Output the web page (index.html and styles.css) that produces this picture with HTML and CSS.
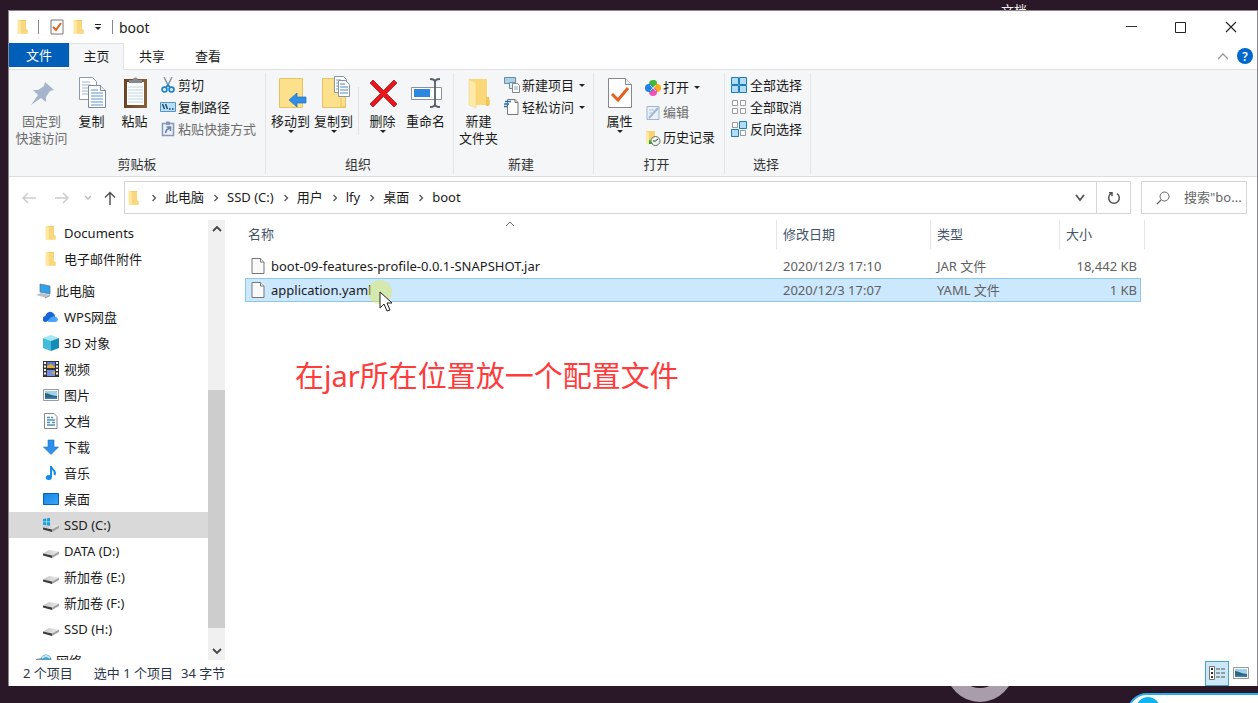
FILE: index.html
```html
<!DOCTYPE html>
<html lang="zh-CN">
<head>
<meta charset="utf-8">
<title>boot</title>
<link rel="stylesheet" href="styles.css">
</head>
<body class="desktop">
<svg class="defs" aria-hidden="true">
  <defs>
    <linearGradient id="blue" x1="0" y1="0" x2="1" y2="1"><stop offset="0" stop-color="#1583e0"/><stop offset="1" stop-color="#3aa8ff"/></linearGradient>
    <linearGradient id="wood" x1="0" y1="0" x2="1" y2="0"><stop offset="0" stop-color="#6b4424"/><stop offset="1" stop-color="#8a6038"/></linearGradient>
    <linearGradient id="metal" x1="0" y1="0" x2="1" y2="0"><stop offset="0" stop-color="#c4c4c4"/><stop offset="1" stop-color="#ededed"/></linearGradient>
    <symbol id="folder" viewBox="0 0 16 16"><path d="M3 1h8v9l1.500 1v3.500H3z" fill="#f5cb62"/><path d="M2.500.5 6 2v13.500L2.500 14z" fill="#ffe7a0"/><path d="M6 2h5v9h1.500v3.500H6z" fill="#fad77c"/></symbol>
    <symbol id="page" viewBox="0 0 16 18"><path d="M2 1.500h8.500l3.500 3.500v11.500H2z" fill="#f9f9f9" stroke="#777"/><path d="M10.500 1.500V5H14" fill="#fff" stroke="#777"/></symbol>
    <symbol id="check" viewBox="0 0 16 18"><path d="M2 2h12v14H2z" fill="#fff" stroke="#777"/><path d="m4 9 3 3 5-7" fill="none" stroke="#e0601e" stroke-width="2"/></symbol>
    <symbol id="drive" viewBox="0 0 16 16"><path d="M0 10.500 6 7l10 1.500-7 4z" fill="url(#metal)"/><path d="m0 10.500 9 2V15l-9-2.500z" fill="#3c3c3c"/><path d="m9 12.500 7-4V11l-7 4z" fill="#a2a2a2"/></symbol>
    <symbol id="picture" viewBox="0 0 16 16"><path d="M.5 2.500h15v11H.5z" fill="#fff" stroke="#999"/><path d="M2 4h12v8H2z" fill="#9fd0f2"/><path d="M2 6c4 0 6 3 12 3v3H2z" fill="#2d6674"/><path d="M2 10.500h12V12H2z" fill="#3e7fc0"/></symbol>
    <symbol id="chev" viewBox="0 0 8 8"><path d="m2.500 1 3 3-3 3" fill="none" stroke="#555" stroke-width="1.300"/></symbol>
  </defs>
</svg>

<span class="desk-label">文档</span>
<div class="desk-ring"></div>
<div class="desk-pill"><i></i></div>

<section class="window">
  <header class="titlebar">
    <svg class="i16"><use href="#folder"/></svg>
    <span class="bar"></span>
    <button class="plain qa-check" aria-label="属性"><svg class="i16 tall"><use href="#check"/></svg></button>
    <button class="plain" aria-label="新建文件夹"><svg class="i16"><use href="#folder"/></svg></button>
    <button class="plain qa-more" aria-label="自定义快速访问工具栏"><svg width="8" height="8" viewBox="0 0 8 8"><path d="M1 1.500h6" stroke="#222"/><path d="M1 4h6L4 7z" fill="#222"/></svg></button>
    <span class="bar"></span>
    <h1 class="title">boot</h1>
    <div class="controls">
      <button class="plain" aria-label="最小化"><svg width="12" height="12"><path d="M1 5.500h11" stroke="#333"/></svg></button>
      <button class="plain" aria-label="最大化"><svg width="12" height="12"><path d="M.5 1.500h10v10H.5z" fill="none" stroke="#222"/></svg></button>
      <button class="plain" aria-label="关闭"><svg width="12" height="12"><path d="m1 1 10 10M11 1 1 11" stroke="#222" stroke-width="1.100"/></svg></button>
    </div>
  </header>

  <nav class="tabs">
    <button class="tab file">文件</button>
    <button class="tab active">主页</button>
    <button class="tab">共享</button>
    <button class="tab">查看</button>
    <div class="tabs-end">
      <button class="plain" aria-label="折叠功能区"><svg width="12" height="8"><path d="m1 7 5-5 5 5" fill="none" stroke="#999" stroke-width="1.300"/></svg></button>
      <button class="plain help" aria-label="帮助">?</button>
    </div>
  </nav>

  <div class="ribbon">
    <section class="group clipboard">
      <div class="tools">
        <button class="big wide off"><svg width="34" height="34" viewBox="0 0 34 34"><path d="m20 6 9 8-4 1-4 6v5l-5-4-10 7 7-10-5-5h5l6-4z" fill="#a6b5cc"/></svg><span>固定到<br>快速访问</span></button>
        <button class="big"><svg width="34" height="34" viewBox="0 0 34 34"><path d="M4.500 1.500h13l4 4v18h-17z" fill="#fff" stroke="#8b98a8"/><path d="M7 6h8M7 9h9M7 12h6M7 15h6M7 18h6" stroke="#9cb4d6"/><path d="M13.500 9.500h12l5 5v17h-17z" fill="#fff" stroke="#7d8a99"/><path d="M25.500 9.500v5h5" fill="#e8eef5" stroke="#7d8a99"/><path d="M16 14h7M16 17h12M16 20h12M16 23h12M16 26h12M16 29h12" stroke="#5c97cb"/></svg><span>复制</span></button>
        <button class="big"><svg width="34" height="34" viewBox="0 0 34 34"><path d="M6 3h23v29H6z" fill="url(#wood)"/><path d="M9 6h17v23H9z" fill="#fff"/><path d="M10 11h15M10 14h15M10 17h15M10 20h15M10 23h15M10 26h15" stroke="#bcd3e4"/><path d="M11 7V4h4a2.500 2.500 0 0 1 5 0h4v3z" fill="#85898d"/></svg><span>粘贴</span></button>
        <div class="stack">
          <button class="small"><svg class="i16" viewBox="0 0 16 16"><path d="m4 0 5 10M12 0 7 10" stroke="#8896a6" stroke-width="1.500"/><g fill="none" stroke="#1983ce" stroke-width="1.700"><circle cx="4.500" cy="12.500" r="2.400"/><circle cx="11.500" cy="12.500" r="2.400"/><path d="m6 10 2-2 2 2"/></g></svg>剪切</button>
          <button class="small"><svg class="i16" viewBox="0 0 16 16"><path d="M.5 3.500h15v9H.5z" fill="#b9dff7" stroke="#5796c4"/><path d="m2.500 5 2 5M5.500 5l2 5M9 10h1.500M12 10h1.500" stroke="#173b5c" stroke-width="1.300"/></svg>复制路径</button>
          <button class="small off"><svg class="i16" viewBox="0 0 16 16"><path d="M2.500 2.500h11v12h-11z" fill="#eef2f8" stroke="#8598bd" stroke-width="1.500"/><path d="M6 .5h4V4H6z" fill="#8598bd"/><path d="m5.500 12 1-3 3-2M6.500 6h4v4" fill="none" stroke="#6781b0" stroke-width="1.600"/></svg>粘贴快捷方式</button>
        </div>
      </div>
      <h2 class="caption">剪贴板</h2>
    </section>

    <section class="group organize">
      <div class="tools">
        <button class="big"><svg width="34" height="34" viewBox="0 0 34 34"><path d="M5.500 2.500h23v29h-23z" fill="#fde08c" stroke="#e8c263"/><path d="m15 24 8-7v4h9v6h-9v4z" fill="#2f8fe6" stroke="#1d6fbd" stroke-width=".7"/></svg><span>移动到</span><i class="drop"></i></button>
        <button class="big"><svg width="34" height="34" viewBox="0 0 34 34"><path d="M5.500 2.500h23v29h-23z" fill="#fde08c" stroke="#e8c263"/><path d="M24 22v9h4" fill="none" stroke="#e8c263"/><path d="M17.500.5h9l3 3v13h-12z" fill="#fff" stroke="#8794a4"/><path d="M19 4h5M19 7h3M19 10h3M19 13h3" stroke="#6fa1cd"/><path d="M21.500 4.500h7l4 4v12h-11z" fill="#fff" stroke="#8794a4"/><path d="M23 8h5M23 11h8M23 14h8M23 17h8" stroke="#4e86be"/></svg><span>复制到</span><i class="drop"></i></button>
        <span class="divider"></span>
        <button class="big"><svg width="34" height="34" viewBox="0 0 34 34"><path d="m7 4 10.500 10.500L28 4l3 3-10.500 10.500L31 28l-3 3-10.500-10.500L7 31l-3-3 10.500-10.500L4 7z" fill="#e9161c" stroke="#a3161a" stroke-width=".8"/></svg><span>删除</span><i class="drop"></i></button>
        <button class="big"><svg width="34" height="34" viewBox="0 0 34 34"><path d="M2.500 11.500h30v12h-30z" fill="#fff" stroke="#8d9299"/><path d="M5 13h16v8H5z" fill="#2c87df"/><path d="M21 3q5 0 5 3v22q0 3-5 3M31 3q-5 0-5 3v22q0 3 5 3" fill="none" stroke="#555f69" stroke-width="1.800"/></svg><span>重命名</span></button>
      </div>
      <h2 class="caption">组织</h2>
    </section>

    <section class="group create">
      <div class="tools">
        <button class="big"><svg width="34" height="34" viewBox="0 0 34 34"><path d="M8 3h17v18l3 2v6H8z" fill="#fbd877"/><path d="M24 21h3v9h-3z" fill="#efc55d"/><path d="m7 3 7 4v25l-7-3z" fill="#ffe9a9" stroke="#edcc78" stroke-width=".5"/></svg><span>新建<br>文件夹</span></button>
        <div class="stack">
          <button class="small"><svg class="i16" viewBox="0 0 16 16"><path d="M.5.5h11v6H.5z" fill="#a9d1e8" stroke="#6b8b9f"/><path d="M5.500 5.500h6v6h-6z" fill="#dceef8" stroke="#6b8b9f"/><path d="M8.500 6.500h5l2 2v7h-7z" fill="#fff" stroke="#888"/><path d="M10 10h4M10 12h4" stroke="#7da5c5"/></svg>新建项目<i class="drop side"></i></button>
          <button class="small"><svg class="i16" viewBox="0 0 16 16"><path d="M3.500.5h7.500l3 3v12H3.500z" fill="#fff" stroke="#777"/><path d="M11 .5v3h3" fill="none" stroke="#777"/><path d="M1 2.500h6M0 5h5M0 7.500h3" stroke="#2a70a8" stroke-width="1.500"/></svg>轻松访问<i class="drop side"></i></button>
        </div>
      </div>
      <h2 class="caption">新建</h2>
    </section>

    <section class="group open">
      <div class="tools">
        <button class="big"><svg width="34" height="34" viewBox="0 0 34 34"><path d="M5.500 2.500h17l6 6v23h-23z" fill="#fff" stroke="#888"/><path d="M22.500 2.500v6h6" fill="#eee" stroke="#888"/><path d="m9 18 6 6 10-12" fill="none" stroke="#e4601f" stroke-width="3"/></svg><span>属性</span><i class="drop"></i></button>
        <div class="stack loose">
          <button class="small"><svg class="i16" viewBox="0 0 16 16"><circle cx="8" cy="4" r="4" fill="#40b93d"/><circle cx="12" cy="8" r="4" fill="#ffad1f"/><circle cx="8" cy="12" r="4" fill="#ee54b5"/><circle cx="4" cy="8" r="4" fill="#1e83e8"/><path d="M8 8V0a4 4 0 0 1 4 4z" fill="#40b93d"/><path d="m5 5 6 6M11 5l-6 6" stroke="#fff" stroke-width=".7"/></svg>打开<i class="drop side"></i></button>
          <button class="small off"><svg class="i16" viewBox="0 0 16 16"><path d="M2 1.500h12v13H2z" fill="#eaf0f8" stroke="#a1b4cf"/><path d="m4 13 9-10" stroke="#a3b6d0" stroke-width="2"/><path d="M4 5h5M4 8h3" stroke="#b1c3da"/></svg>编辑</button>
          <button class="small"><svg class="i16" viewBox="0 0 16 16"><path d="M1 1h9v12H1z" fill="#f9d371"/><path d="m1 1 3 2v12l-3-2z" fill="#ffe9a6"/><circle cx="10.500" cy="11" r="4.500" fill="#edf3ed" stroke="#627466"/><path d="M10.500 11 13 9M10.500 11H8" stroke="#333"/><path d="M4 9.500 8 14H4z" fill="#27a33a"/></svg>历史记录</button>
        </div>
      </div>
      <h2 class="caption">打开</h2>
    </section>

    <section class="group select">
      <div class="tools">
        <div class="stack">
          <button class="small"><svg class="i16" viewBox="0 0 16 16"><path d="M.5.500h7v7h-7zM8.500.500h7v7h-7zM.5 8.500h7v7h-7zM8.500 8.500h7v7h-7z" fill="#b2dcf5" stroke="#1c7cbd"/></svg>全部选择</button>
          <button class="small"><svg class="i16" viewBox="0 0 16 16"><path d="M1.500 1.500h5v5h-5zM9.500 1.500h5v5h-5zM1.500 9.500h5v5h-5zM9.500 9.500h5v5h-5z" fill="#fff" stroke="#9a9a9a"/></svg>全部取消</button>
          <button class="small"><svg class="i16" viewBox="0 0 16 16"><path d="M1.500 1.500h5v5h-5zM9.500 9.500h5v5h-5z" fill="#fff" stroke="#9a9a9a"/><path d="M8.500.500h7v7h-7zM.5 8.500h7v7h-7z" fill="#b2dcf5" stroke="#1c7cbd"/></svg>反向选择</button>
        </div>
      </div>
      <h2 class="caption">选择</h2>
    </section>
  </div>

  <div class="address">
    <div class="history">
      <button class="plain" aria-label="后退"><svg width="14" height="12"><path d="M14 6H1M6 1 1 6l5 5" fill="none" stroke="#ccc" stroke-width="1.500"/></svg></button>
      <button class="plain" aria-label="前进"><svg width="14" height="12"><path d="M0 6h13M8 1l5 5-5 5" fill="none" stroke="#ccc" stroke-width="1.500"/></svg></button>
      <button class="plain recent" aria-label="最近位置"><svg width="8" height="6"><path d="m1 1 3 3 3-3" fill="none" stroke="#bbb" stroke-width="1.300"/></svg></button>
      <button class="plain up" aria-label="上移"><svg width="12" height="14"><path d="M6 14V1.500M1 6.500l5-5 5 5" fill="none" stroke="#555" stroke-width="1.500"/></svg></button>
    </div>
    <div class="path">
      <svg class="i16 lead"><use href="#folder"/></svg>
      <svg class="chev"><use href="#chev"/></svg><a href="#">此电脑</a>
      <svg class="chev"><use href="#chev"/></svg><a href="#">SSD (C:)</a>
      <svg class="chev"><use href="#chev"/></svg><a href="#">用户</a>
      <svg class="chev"><use href="#chev"/></svg><a href="#">lfy</a>
      <svg class="chev"><use href="#chev"/></svg><a href="#">桌面</a>
      <svg class="chev"><use href="#chev"/></svg><a href="#">boot</a>
      <button class="plain path-drop" aria-label="以前的位置"><svg width="10" height="8"><path d="m1 1 4 5 4-5" fill="none" stroke="#555" stroke-width="1.800"/></svg></button>
      <button class="plain refresh" aria-label="刷新"><svg width="14" height="14" viewBox="0 0 14 14"><path d="M4 2.500a5.300 5.300 0 1 0 6 0M2 1.800h3v3.500" fill="none" stroke="#555" stroke-width="1.500"/></svg></button>
    </div>
    <label class="search">
      <svg width="14" height="14" viewBox="0 0 14 14"><circle cx="8.500" cy="5.500" r="4.500" fill="none" stroke="#666"/><path d="m5 9-4 4" stroke="#666" stroke-width="1.300"/></svg>
      <input type="text" aria-label="搜索" placeholder="搜索&quot;bo...">
    </label>
  </div>

  <div class="content">
    <aside class="sidebar">
      <ul class="tree">
        <li class="lv2"><svg class="i16"><use href="#folder"/></svg>Documents</li>
        <li class="lv2"><svg class="i16"><use href="#folder"/></svg>电子邮件附件</li>
        <li class="root"><svg class="i16" viewBox="0 0 16 16"><path d="m4 1 10 2v8L4 9z" fill="#35a0ec" stroke="#53738d" stroke-width=".7"/><path d="m0 12 5-2 9 2-5 2.500z" fill="#b9c2c9"/><path d="m9 14.500 5-2.500v1l-5 2.500z" fill="#7d8790"/></svg>此电脑</li>
        <li class="lv2"><svg class="i16" viewBox="0 0 16 16"><path d="M3 13a3 3 0 0 1-.5-6A4.500 4.500 0 0 1 10 4a4 4 0 0 1 2 4z" fill="#1767d6"/><path d="M5 13c1-4 5-7 8-5a2.600 2.600 0 0 1 0 5z" fill="#48a5ff"/></svg>WPS网盘</li>
        <li class="lv2"><svg class="i16" viewBox="0 0 16 16"><path d="m0 3 8-3 8 3-8 3z" fill="#a6e7f3"/><path d="m0 3 8 3v10l-8-3z" fill="#41bdd9"/><path d="m8 6 8-3v10l-8 3z" fill="#148cb7"/></svg>3D 对象</li>
        <li class="lv2"><svg class="i16" viewBox="0 0 16 16"><path d="M0 0h16v16H0z" fill="#333"/><path d="M4 1h8v6H4z" fill="#5d80cf"/><path d="M4 9h8v6H4z" fill="#7290e0"/><path d="m4 5 4-2 4 3v1H4zM8 12l4-2v3z" fill="#e6ae38"/><path d="M2 1v14M14 1v14" stroke="#fff" stroke-width="2" stroke-dasharray="2 1.500"/></svg>视频</li>
        <li class="lv2"><svg class="i16"><use href="#picture"/></svg>图片</li>
        <li class="lv2"><svg class="i16" viewBox="0 0 16 16"><path d="M1.500.5H11l3 3v12H1.500z" fill="#fff" stroke="#888"/><path d="M4 4.500h3M8 4.500h2M4 7h8M4 9.500h3M9 9.500h3M4 12h8" stroke="#4f91b5" stroke-width="1.300"/></svg>文档</li>
        <li class="lv2"><svg class="i16" viewBox="0 0 16 16"><path d="M5 1h6v7h4.500L8 15.500.5 8H5z" fill="#2b8fec" stroke="#1e6fbe" stroke-width=".6"/></svg>下载</li>
        <li class="lv2"><svg class="i16" viewBox="0 0 16 16"><path d="M8 1v11M8 1c0 4 6 4 3.500 9" fill="none" stroke="#118be6" stroke-width="1.900"/><ellipse cx="5.800" cy="12.500" rx="3" ry="2.500" fill="#118be6"/></svg>音乐</li>
        <li class="lv2"><svg class="i16" viewBox="0 0 16 16"><path d="M.5 2.500h15v11H.5z" fill="url(#blue)" stroke="#0a5fae"/></svg>桌面</li>
        <li class="lv2 selected"><svg class="i16" viewBox="0 0 16 16"><use href="#drive"/><path d="M0 2 3 1.500v3H0zM3.700 1.400 7 .8v3.700H3.700zM0 5.200h3v3L0 7.700zM3.700 5.200H7v3.600l-3.300-.6z" fill="#10a2e2"/></svg>SSD (C:)</li>
        <li class="lv2"><svg class="i16"><use href="#drive"/></svg>DATA (D:)</li>
        <li class="lv2"><svg class="i16"><use href="#drive"/></svg>新加卷 (E:)</li>
        <li class="lv2"><svg class="i16"><use href="#drive"/></svg>新加卷 (F:)</li>
        <li class="lv2"><svg class="i16"><use href="#drive"/></svg>SSD (H:)</li>
        <li class="root"><svg class="i16" viewBox="0 0 16 16"><circle cx="10" cy="7" r="5.500" fill="#4aa0cf"/><path d="M6 5q4-4 8 0" stroke="#bfe6f5" fill="none" stroke-width="2"/><path d="M0 6 6 5v6l-6-1z" fill="#8294a5"/></svg>网络</li>
      </ul>
      <div class="scroll">
        <button class="plain" aria-label="向上滚动"><svg width="10" height="8"><path d="m1 6 4-4 4 4" fill="none" stroke="#444" stroke-width="1.800"/></svg></button>
        <span class="track-top"></span><span class="thumb"></span><span class="track-end"></span>
        <button class="plain" aria-label="向下滚动"><svg width="10" height="8"><path d="m1 2 4 4 4-4" fill="none" stroke="#444" stroke-width="1.800"/></svg></button>
      </div>
    </aside>

    <main class="files">
      <table class="list">
        <colgroup><col><col class="c-date"><col class="c-type"><col class="c-size"></colgroup>
        <thead>
          <tr><th>名称<svg class="sort" width="10" height="6"><path d="m1 5 4-4 4 4" fill="none" stroke="#666"/></svg></th><th>修改日期</th><th>类型</th><th>大小</th></tr>
        </thead>
        <tbody>
          <tr><td><span class="name"><svg class="i16 tall"><use href="#page"/></svg>boot-09-features-profile-0.0.1-SNAPSHOT.jar</span></td><td>2020/12/3 17:10</td><td>JAR 文件</td><td>18,442 KB</td></tr>
          <tr class="picked"><td><span class="name"><svg class="i16 tall"><use href="#page"/></svg>application.yaml</span></td><td>2020/12/3 17:07</td><td>YAML 文件</td><td>1 KB</td></tr>
        </tbody>
      </table>
      <span class="glow"></span>
      <svg class="cursor" width="14" height="22" viewBox="0 0 14 22"><path d="M1 1v16l4-4 3 7 3-1-3-7h5z" fill="#fff" stroke="#222"/></svg>
      <p class="note">在jar所在位置放一个配置文件</p>
    </main>
  </div>

  <footer class="status">
    <span>2 个项目</span><span class="picked-count">选中 1 个项目</span><span>34 字节</span>
    <div class="views">
      <button class="plain view on" aria-label="详细信息"><svg width="16" height="16" viewBox="0 0 16 16"><path d="M.5 1.500h5v13h-5z" fill="#fff" stroke="#777"/><path d="M3 3v2M3 7v2M3 11v2" stroke="#333" stroke-width="2"/><path d="M7 4h9M7 8h9M7 12h9" stroke="#555" stroke-dasharray="4 1"/></svg></button>
      <button class="plain view" aria-label="大缩略图"><svg class="i16"><use href="#picture"/></svg></button>
    </div>
  </footer>
</section>
</body>
</html>
```
FILE: styles.css
```css
* { box-sizing: border-box; }

.desktop {
  margin: 0;
  height: 100vh;
  padding: 10px 0 17px 8px;
  background: #2a1728;
  font: 13px/17px "Noto Sans", "Noto Sans CJK SC", sans-serif;
  color: #1b1b1b;
  overflow: hidden;
  position: relative;
}

.defs { position: absolute; width: 0; height: 0; }
.desk-label { position: absolute; top: 2px; left: 1001px; color: #eee; }
.desk-ring {
  position: absolute; right: 244px; bottom: 1px;
  width: 68px; height: 68px; border-radius: 50%;
  border: 14px solid #a99dab;
}
.desk-pill {
  position: absolute; right: -40px; bottom: -30px;
  width: 171px; height: 40px; border-radius: 20px;
  border: 2px solid #26aee6; background: #fff;
}
.desk-pill i {
  position: absolute; left: 7px; top: 2px;
  width: 24px; height: 24px; border-radius: 50%; background: #10b5ef;
}

.window {
  position: relative;
  height: 100%;
  display: flex;
  flex-direction: column;
  background: #fff;
  border: 1px solid #8b858d;
  border-bottom: 0;
}

button { font: inherit; color: inherit; }
.plain {
  display: flex; align-items: center; justify-content: center;
  padding: 0; border: 0; background: none;
}
.i16 { width: 16px; height: 16px; flex: none; }
.tall { height: 18px; }

/* title bar */
.titlebar { display: flex; align-items: center; height: 32px; flex: none; padding-left: 6px; }
.bar { width: 1px; height: 14px; margin: 0 6px 0 7px; background: #888; }
.qa-check { margin: 0 6px 0 4px; }
.qa-more { margin: 0 3px 0 7px; }
.title { margin: 0; font-size: 14px; font-weight: 400; }
.controls { display: flex; margin-left: auto; padding-right: 1px; }
.controls button { width: 50px; height: 32px; }

/* tabs */
.tabs { display: flex; height: 27px; flex: none; border-bottom: 1px solid #e2e2e2; }
.tab { height: 27px; padding: 0; width: 56px; border: 1px solid transparent; background: none; }
.tab.file { width: 60px; height: 24px; background: #005fb8; color: #fff; }
.tab.active { width: 55px; background: #f4f6f7; border-color: #e2e2e2; border-bottom-color: #f4f6f7; }
.tabs-end { display: flex; align-items: center; gap: 8px; margin-left: auto; padding-right: 4px; }
.help {
  width: 16px; height: 16px; border-radius: 50%;
  background: #0068cc; color: #fff; font-size: 12px; font-weight: 600;
}

/* ribbon */
.ribbon { display: flex; flex: none; background: #f4f6f7; border-bottom: 1px solid #dcdddd; padding: 3px 0 2px; }
.group {
  display: flex; flex-direction: column; justify-content: space-between;
  height: 101px; border-right: 1px solid #e3e4e5;
}
.clipboard { padding: 0 4px; }
.clipboard .tools { padding-right: 5px; }
.organize { padding: 0 6px 0 3px; }
.create { padding: 0 8px 0 3px; }
.open { padding: 0 9px 0 4px; }
.select { padding: 0 8px 0 5px; }
.tools { display: flex; }
.big {
  display: flex; flex-direction: column; align-items: center;
  width: 43px; padding: 3px 0 0; border: 0; background: none; white-space: nowrap;
}
.big span { margin-top: 3px; }
.big.wide { width: 57px; }
.off { color: #6d6d6d; }
.drop { width: 0; height: 0; border: 3px solid transparent; border-top-color: #222; border-bottom: 0; }
.drop.side { margin-left: 3px; }
.divider { width: 1px; height: 48px; margin: 14px 2px 0 3px; background: #e0e1e2; }
.stack { display: flex; flex-direction: column; margin-left: 4px; padding-top: 1px; }
.stack.loose { padding-top: 2px; }
.select .stack { margin-left: 0; }
.small {
  display: flex; align-items: center; gap: 2px;
  height: 22px; padding: 0; border: 0; background: none; white-space: nowrap;
}
.select .small { gap: 3px; padding-left: 1px; }
.loose .small { height: 25px; }
.caption { margin: 0; font-size: 13px; font-weight: 400; text-align: center; color: #333; line-height: 20px; }

/* address row */
.address { display: flex; flex: none; height: 43px; padding: 4px 10px 6px 3px; }
.history { display: flex; width: 112px; }
.history button { width: 33px; }
.history .recent { width: 19px; }
.history .up { width: 25px; }
.path { flex: 1; display: flex; align-items: center; border: 1px solid #d5d5d5; }
.path a { color: inherit; text-decoration: none; }
.lead { margin-left: 1px; }
.chev { width: 8px; height: 8px; margin: 0 7px 0 8px; }
.path-drop { width: 32px; height: 100%; margin-left: auto; }
.refresh { width: 34px; height: 100%; border-left: 1px solid #d5d5d5; }
.search {
  display: flex; align-items: center; gap: 14px;
  width: 106px; margin-left: 10px; padding-left: 14px; border: 1px solid #d5d5d5;
}
.search svg { flex: none; }
.search input { flex: 1; min-width: 0; padding: 0; border: 0; outline: 0; background: none; font: inherit; }
.search input::placeholder { color: #666; }

/* content */
.content { flex: 1; min-height: 0; display: flex; }
.sidebar { display: flex; flex: none; width: 216px; overflow: hidden; }
.tree { flex: 1; margin: 0; padding: 0; list-style: none; }
.tree li { display: flex; align-items: center; gap: 5px; height: 26px; }
.tree .lv2 { padding-left: 34px; }
.tree .root { margin-top: 6px; padding-left: 27px; gap: 4px; }
.tree .selected { background: #d9d9d9; }
.scroll { display: flex; flex-direction: column; width: 17px; background: #f0f0f0; }
.scroll button { height: 18px; }
.track-top { flex: 152; }
.thumb { flex: 238; background: #cdcdcd; }
.track-end { flex: 14; }

.files { position: relative; flex: 1; padding: 0 116px 0 20px; }
.list { width: 100%; table-layout: fixed; border-collapse: separate; border-spacing: 0; }
.c-date { width: 154px; }
.c-type { width: 129px; }
.c-size { width: 82px; }
.list th {
  position: relative; height: 29px; padding: 0 6px; text-align: left;
  font-weight: 400; color: #44546a; border-left: 1px solid #e5e5e5;
}
.list th:first-child { padding-left: 3px; border-left: 0; }
.list th:last-child::after {
  content: ""; position: absolute; top: 0; bottom: 0; right: -4px; width: 1px; background: #e5e5e5;
}
.sort { position: absolute; top: 1px; left: calc(50% - 6px); }
.list tbody::before { content: ""; display: block; height: 5px; }
.list td { height: 24px; padding: 0 7px; color: #606060; border: 1px solid transparent; border-width: 1px 0; white-space: nowrap; }
.list td:first-child { padding-left: 4px; border-left-width: 1px; color: #1b1b1b; }
.list td:last-child { padding-right: 3px; border-right-width: 1px; text-align: right; }
.picked td { background: #cce8ff; border-color: #8fc6ee; }
.name { display: flex; align-items: center; gap: 5px; }
.glow { position: absolute; left: 143px; top: 60px; width: 24px; height: 24px; border-radius: 50%; background: #dde75b80; }
.cursor { position: absolute; left: 154px; top: 71px; }
.note { position: absolute; left: 70px; top: 135px; margin: 0; font-size: 29px; line-height: 42px; color: #ff3b3b; white-space: nowrap; }

/* status bar */
.status { display: flex; align-items: center; flex: none; height: 26px; padding-left: 14px; color: #2a3648; }
.picked-count { margin: 0 8px 0 21px; }
.views { display: flex; margin-left: auto; padding-right: 4px; }
.view { width: 24px; height: 25px; }
.view.on { background: #cce8f6; border: 1px solid #4ba3bd; }
```
